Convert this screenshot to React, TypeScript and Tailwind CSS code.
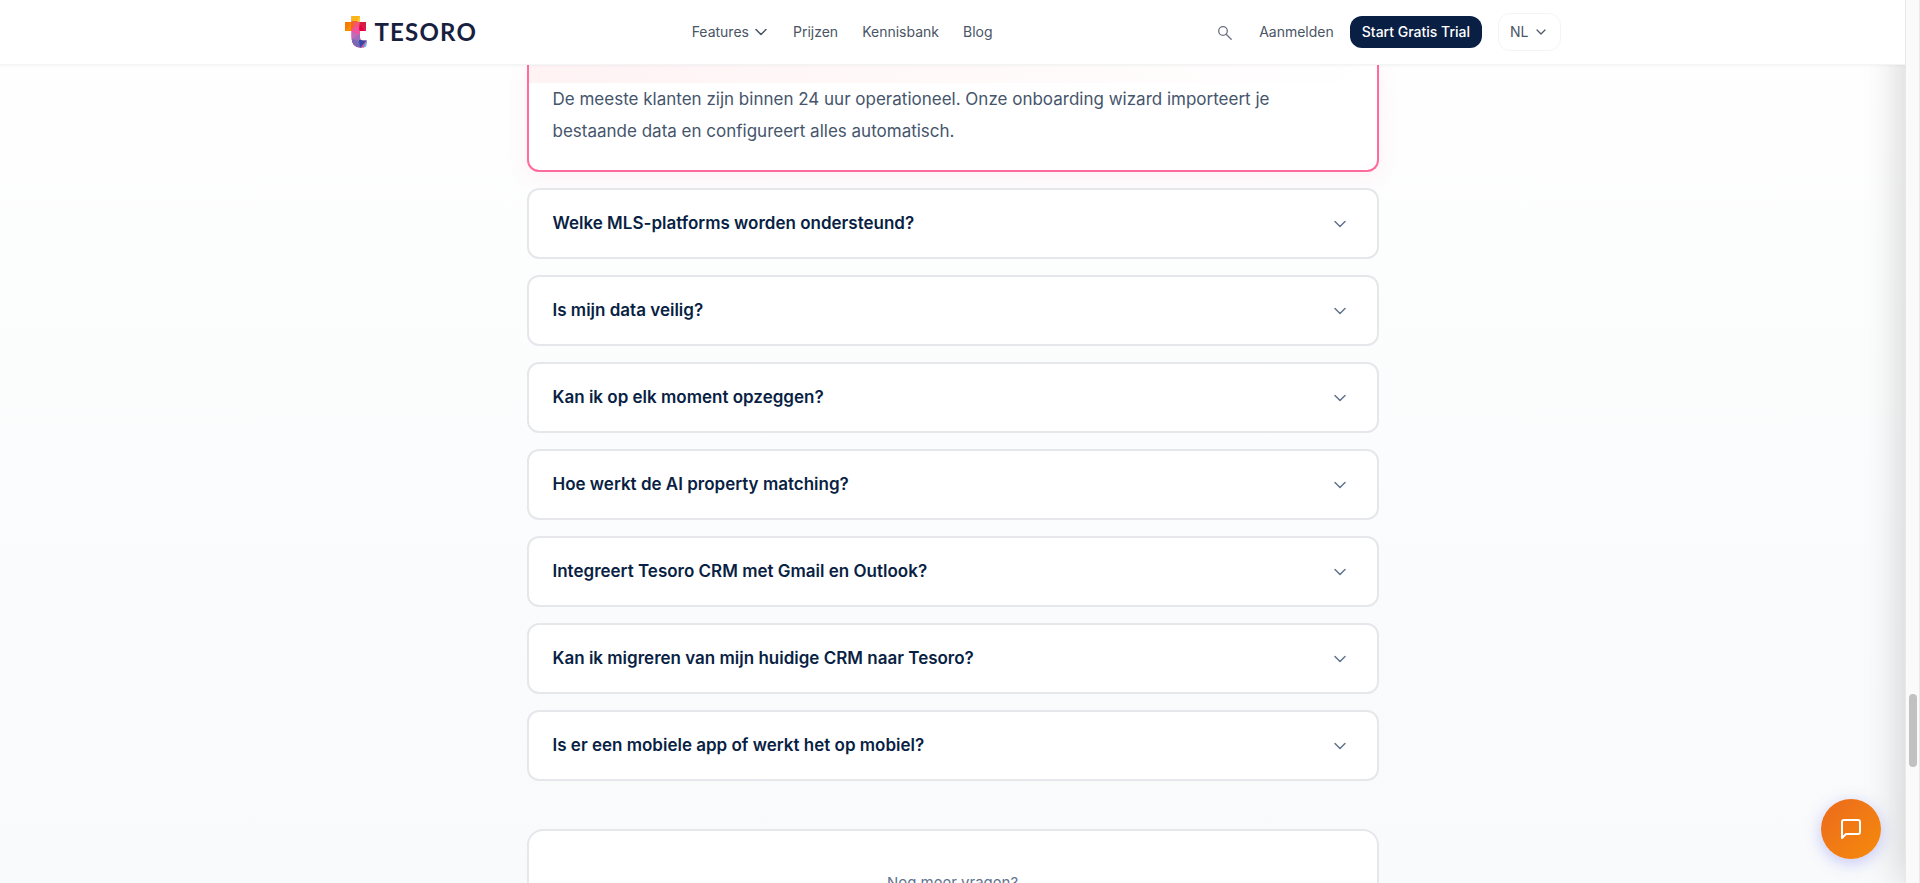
import { useState } from "react";

const questions = [
  "Welke MLS-platforms worden ondersteund?",
  "Is mijn data veilig?",
  "Kan ik op elk moment opzeggen?",
  "Hoe werkt de AI property matching?",
  "Integreert Tesoro CRM met Gmail en Outlook?",
  "Kan ik migreren van mijn huidige CRM naar Tesoro?",
  "Is er een mobiele app of werkt het op mobiel?",
];

function Chevron({ className }: { className: string }) {
  return (
    <svg viewBox="0 0 24 24" fill="none" stroke="currentColor" strokeWidth="1.8" strokeLinecap="round" strokeLinejoin="round" className={className} aria-hidden="true">
      <path d="m6 9 6 6 6-6" />
    </svg>
  );
}

function LogoMark() {
  return (
    <svg viewBox="0 0 22 32" className="h-8 w-[22px]" aria-hidden="true">
      <defs>
        <clipPath id="mark">
          <path d="M6.5 0H15V6H21V15H15V20.500Q15 24.500 18 24.500H22L21 30.500Q19 31.800 16 31.800Q6.500 31.800 6.500 21V15H0V6H6.500Z" />
        </clipPath>
      </defs>
      <g clipPath="url(#mark)">
        <rect width="22" height="32" fill="#ec4899" />
        <path d="M6 0H15V6H6Z" fill="#fbb615" />
        <path d="M15 0V6L10 9Z" fill="#fccb3d" />
        <path d="M0 6H6.500L5 15H0Z" fill="#f57c00" />
        <path d="M0 15 7 6V15Z" fill="#fb8c00" />
        <path d="M6 5H13L6 15Z" fill="#f4632e" />
        <path d="M10 6H16L15 10 11 14Z" fill="#f0567a" />
        <path d="M14.500 6H22V15L15 9Z" fill="#d81b45" />
        <path d="M14.500 8 21 15H14Z" fill="#e5003c" />
        <path d="M6 15 11 9 15 15V19Z" fill="#f0529b" />
        <path d="M6 15 15 19 6 24Z" fill="#c46ab8" />
        <path d="M6 24 15 18V24L9 29Z" fill="#9a6fbb" />
        <path d="M6 23 14 25 17 32H6Z" fill="#7a68b4" />
        <path d="M14 24 22 24 15 32Z" fill="#2f4ba8" />
        <path d="M22 24V32H18Z" fill="#4fc3f7" />
      </g>
    </svg>
  );
}

function Header() {
  return (
    <header className="relative z-20 border-b border-gray-100 bg-white shadow-[0_1px_3px_rgba(0,0,0,0.04)]">
      <div className="mx-auto flex h-16 max-w-7xl items-center justify-between px-8">
        <a href="#" className="flex items-center gap-2">
          <LogoMark />
          <span className="font-['Lato',sans-serif] text-2xl font-bold tracking-wider text-[#17213f]">TESORO</span>
        </a>
        <nav className="flex items-center gap-6 text-sm text-gray-600">
          <button type="button" className="flex items-center gap-1">
            Features
            <svg viewBox="0 0 16 16" fill="none" stroke="currentColor" strokeWidth="1.5" strokeLinecap="round" strokeLinejoin="round" className="size-4" aria-hidden="true">
              <path d="m3 5.500 5 5 5-5" />
            </svg>
          </button>
          <a href="#prijzen">Prijzen</a>
          <a href="#kennisbank">Kennisbank</a>
          <a href="#blog">Blog</a>
        </nav>
        <div className="flex items-center gap-4 text-sm text-gray-600">
          <button type="button" aria-label="Zoeken" className="flex size-9 items-center justify-center text-gray-500">
            <svg viewBox="0 0 16 16" fill="none" stroke="currentColor" strokeWidth="1.3" strokeLinecap="round" className="size-4" aria-hidden="true">
              <circle cx="6" cy="7" r="4.300" />
              <path d="m9.200 10.200 5 5" />
            </svg>
          </button>
          <a href="#aanmelden">Aanmelden</a>
          <a href="#trial" className="rounded-xl bg-[#0a1f44] px-3 py-1.5 font-medium text-white">Start Gratis Trial</a>
          <button type="button" className="flex h-[38px] items-center gap-1 rounded-xl border border-gray-100 px-[11px]">
            NL
            <Chevron className="size-4" />
          </button>
        </div>
      </div>
    </header>
  );
}

export default function App() {
  const [selected, setSelected] = useState(-1);
  return (
    <div className="flex h-screen overflow-hidden bg-white font-['Inter',sans-serif]">
      <div className="relative flex min-w-0 flex-1 flex-col overflow-hidden">
        <Header />
        <main className="min-h-0 flex-1 overflow-hidden bg-linear-to-b from-[#fefefe] to-[#f8fafb]">
          <div className="mx-auto flex max-w-[852px] flex-col gap-4">
            <section className="rounded-b-xl border-2 border-t-0 border-[#ff6b9d] bg-white shadow-[0_4px_20px_rgba(255,107,157,0.1)]">
              <div className="h-[18px] bg-linear-to-r from-[#fff3f4] to-white" />
              <p className="px-6 pb-[23px] text-[17px] leading-8 text-slate-600">
                De meeste klanten zijn binnen 24 uur operationeel. Onze onboarding wizard importeert je bestaande data en configureert alles automatisch.
              </p>
            </section>
            {questions.map((q, i) => (
              <button
                key={q}
                type="button"
                aria-pressed={selected === i}
                onClick={() => setSelected(selected === i ? -1 : i)}
                className="flex h-[71px] items-center justify-between rounded-xl border-2 border-gray-200 bg-white pr-[27px] pl-6 text-left text-[17px] font-semibold text-[#0a1f44]"
              >
                {q}
                <Chevron className="size-5 text-slate-500" />
              </button>
            ))}
            <section className="mt-8 rounded-2xl border-2 border-gray-200 bg-white p-10 text-center">
              <p className="text-[15px] leading-6 text-slate-500">Nog meer vragen?</p>
            </section>
          </div>
        </main>
        <div className="pointer-events-none absolute inset-y-0 -right-8 z-10 w-8 shadow-[0_0_40px_rgba(0,0,0,0.22)]" />
        <button
          type="button"
          aria-label="Chat"
          className="absolute right-6 bottom-6 z-20 flex size-[60px] items-center justify-center rounded-full bg-linear-to-br from-[#ec6a1c] to-[#f58a07] text-white shadow-[0_4px_16px_rgba(99,102,241,0.35)]"
        >
          <svg viewBox="0 0 24 24" fill="none" stroke="currentColor" strokeWidth="2" strokeLinecap="round" strokeLinejoin="round" className="size-6" aria-hidden="true">
            <path d="M21 15a2 2 0 0 1-2 2H7l-4 4V5a2 2 0 0 1 2-2h14a2 2 0 0 1 2 2z" />
          </svg>
        </button>
      </div>
      <div className="relative w-[15px] shrink-0 border-x border-[#e8e8e8] bg-[#fafafa]">
        <div className="absolute top-[78.6%] right-0.5 h-[8.3%] w-2 rounded-full bg-[#c1c1c1]" />
      </div>
    </div>
  );
}
